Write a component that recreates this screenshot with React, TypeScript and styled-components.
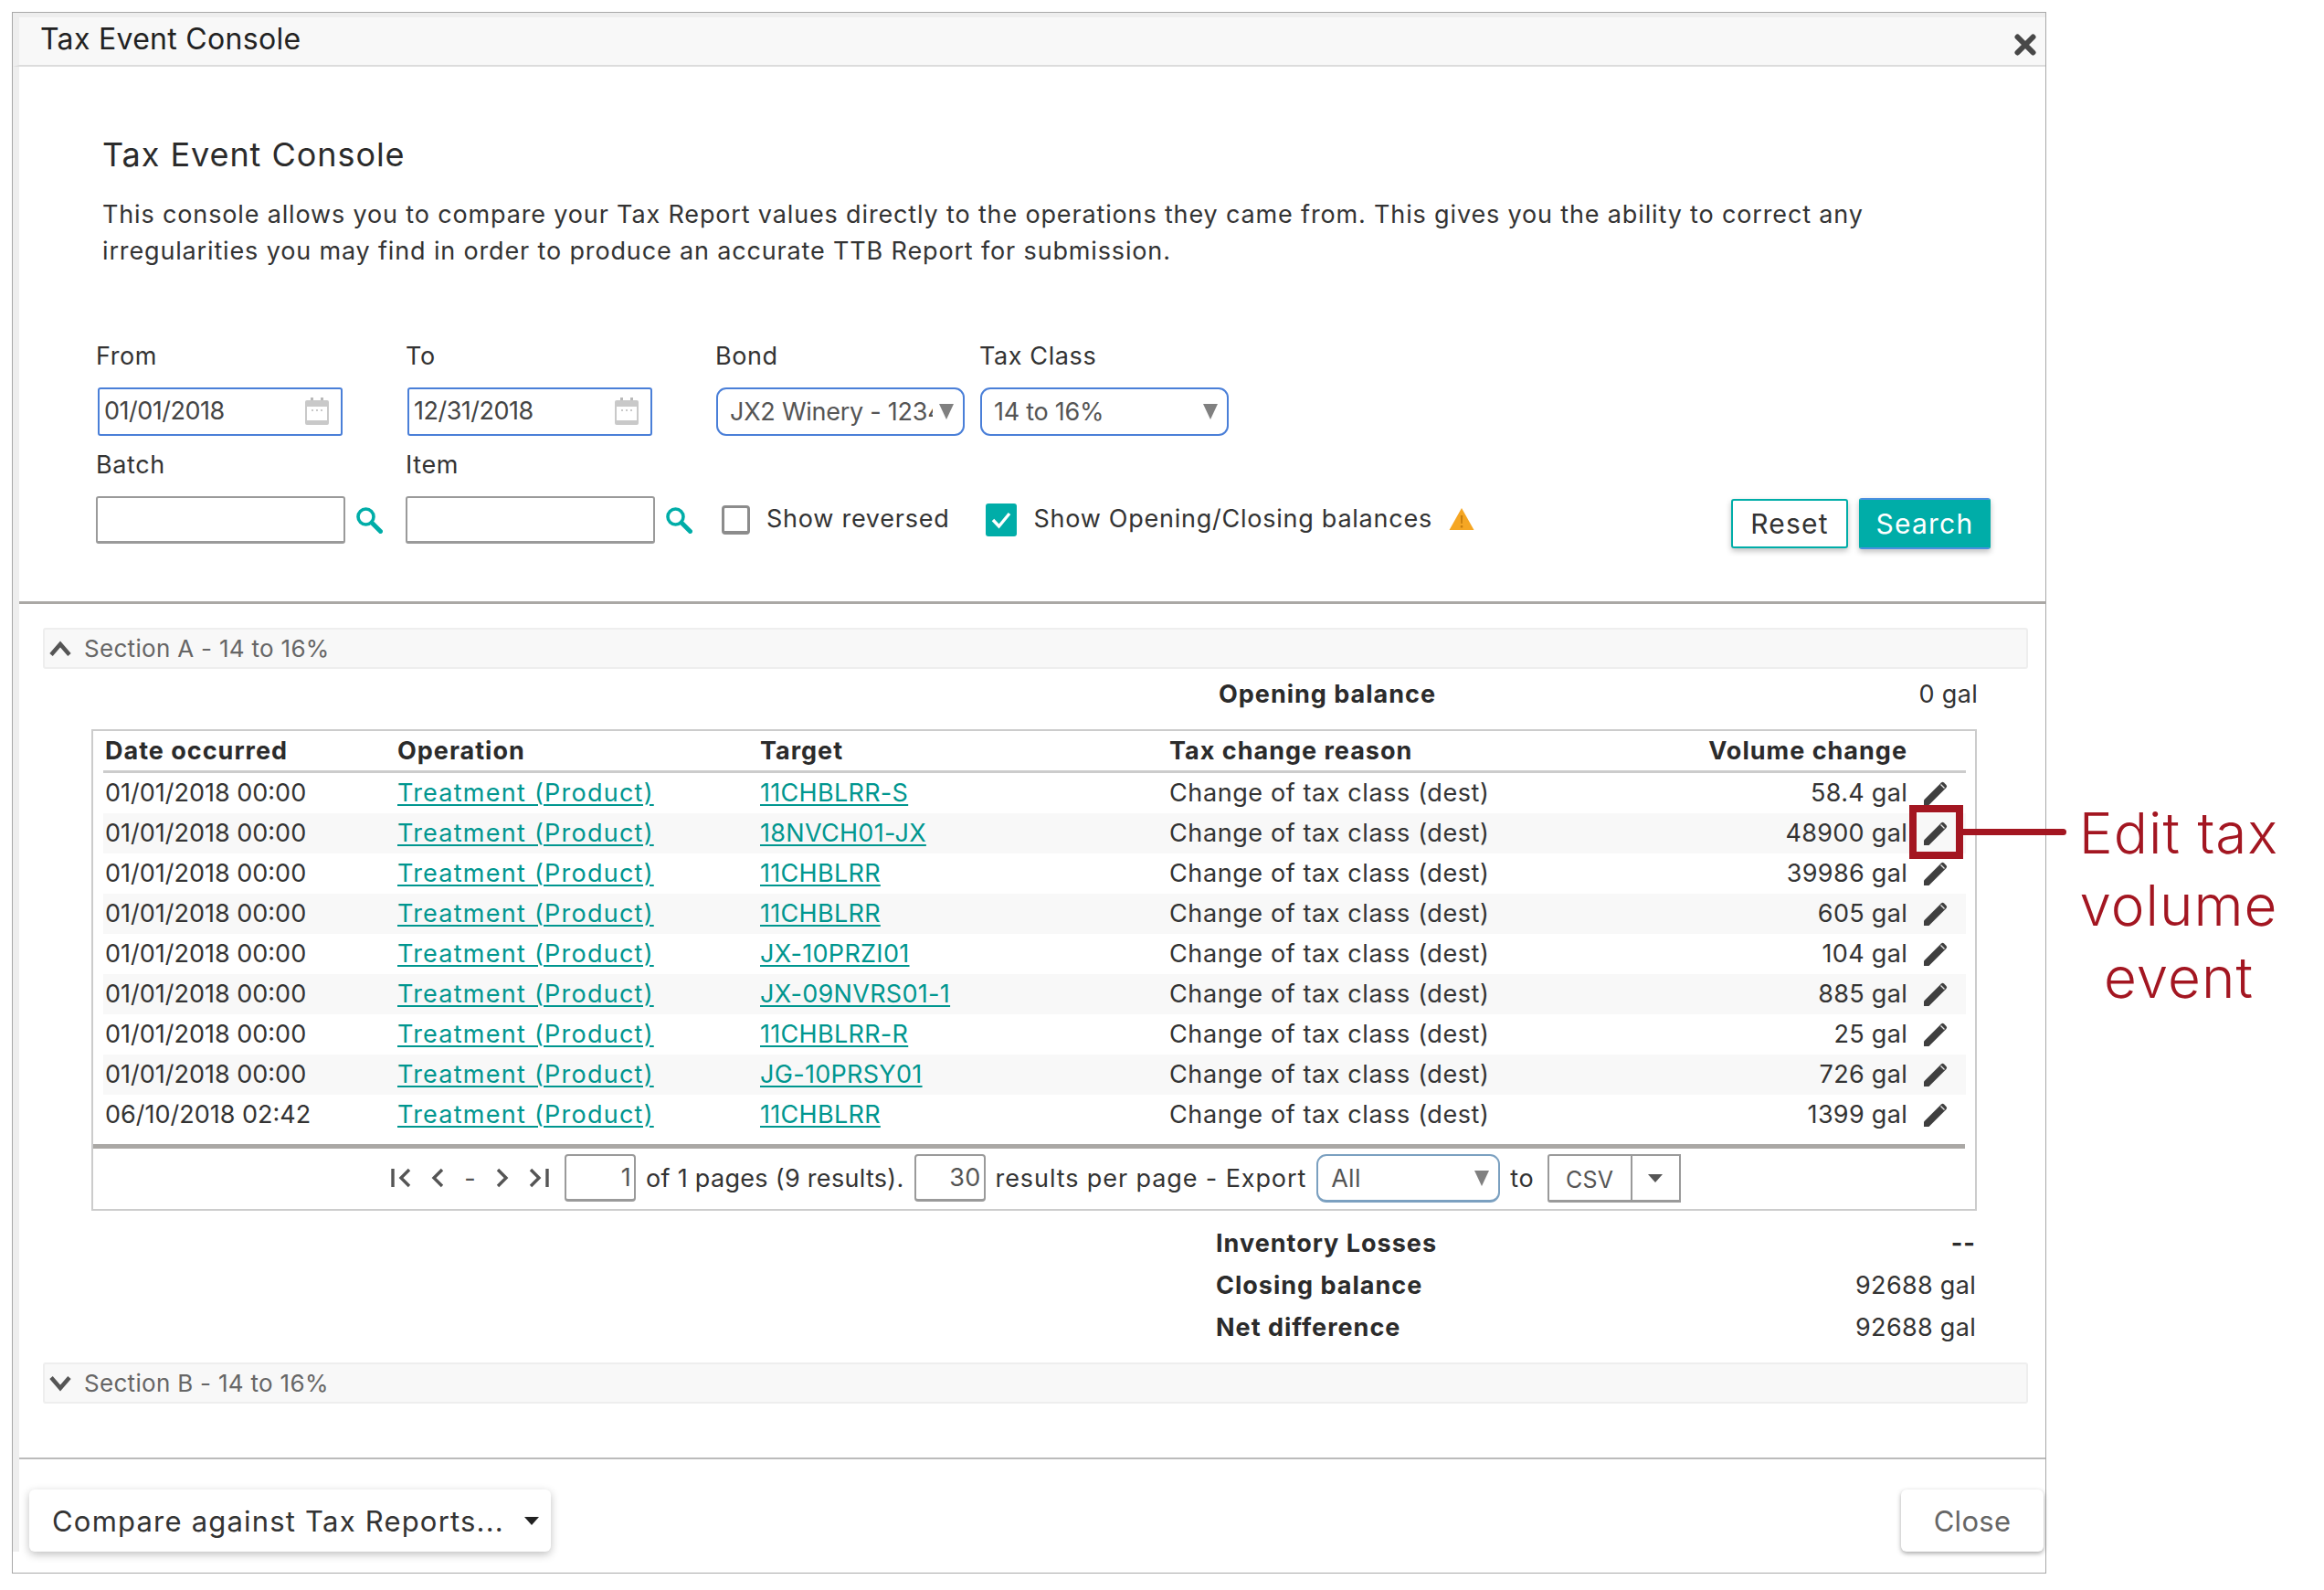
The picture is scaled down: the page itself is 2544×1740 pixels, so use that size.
import { FC } from "react";
import styled, { createGlobalStyle } from "styled-components";

const RED = "#a31621";
const TEAL = "#00ada8";
const LINK = "#00968f";

const rows = [
  { date: "01/01/2018 00:00", target: "11CHBLRR-S", volume: "58.4 gal" },
  { date: "01/01/2018 00:00", target: "18NVCH01-JX", volume: "48900 gal", marked: true },
  { date: "01/01/2018 00:00", target: "11CHBLRR", volume: "39986 gal" },
  { date: "01/01/2018 00:00", target: "11CHBLRR", volume: "605 gal" },
  { date: "01/01/2018 00:00", target: "JX-10PRZI01", volume: "104 gal" },
  { date: "01/01/2018 00:00", target: "JX-09NVRS01-1", volume: "885 gal" },
  { date: "01/01/2018 00:00", target: "11CHBLRR-R", volume: "25 gal" },
  { date: "01/01/2018 00:00", target: "JG-10PRSY01", volume: "726 gal" },
  { date: "06/10/2018 02:42", target: "11CHBLRR", volume: "1399 gal" },
];

const CloseIcon: FC = () => (
  <svg width="24" height="24" viewBox="0 0 24 24" fill="none" stroke="#484848" strokeWidth="6" strokeLinecap="round">
    <path d="M3.500 3.500l17 17M20.500 3.500l-17 17" />
  </svg>
);

const CalendarIcon: FC = () => (
  <svg width="28" height="32" viewBox="0 0 28 32">
    <path d="M7 1h3v4H7zM18 1h3v4h-3z" fill="#b8b8b8" />
    <rect x="1" y="4" width="26" height="27" rx="2" fill="#c9c9c9" />
    <rect x="3" y="11" width="22" height="15" fill="#fff" />
    <path d="M8 14h2v2H8zM13 14h2v2h-2zM18 14h2v2h-2z" fill="#c9c9c9" />
  </svg>
);

const SearchIcon: FC = () => (
  <svg width="30" height="30" viewBox="0 0 30 30" fill="none" stroke={TEAL}>
    <circle cx="11.5" cy="11.5" r="8.5" strokeWidth="3.6" />
    <path d="M18 18l9.5 9.5" strokeWidth="5" strokeLinecap="round" />
  </svg>
);

const WarningIcon: FC = () => (
  <svg width="28" height="26" viewBox="0 0 28 26">
    <path d="M14 1L27.5 25H.5z" fill="#f5a623" />
    <path d="M12.8 9h2.4l-.4 9h-1.6zM12.8 20h2.4v2.4h-2.4z" fill="#c77f10" />
  </svg>
);

const CheckIcon: FC = () => (
  <svg width="24" height="24" viewBox="0 0 24 24" fill="none" stroke="#fff" strokeWidth="3.4">
    <path d="M3 12l6.5 7L21 5" />
  </svg>
);

const PencilIcon: FC = () => (
  <svg width="28" height="28" viewBox="0 0 28 28">
    <path d="M1 27v-5.500L20 2.500a2.200 2.200 0 0 1 3 0l2.500 2.500a2.200 2.200 0 0 1 0 3L6.500 27z" fill="#3f3f3f" />
    <path d="M19.500 4.500l4 4" stroke="#e8e8e8" strokeWidth="1.200" />
  </svg>
);

const Chevron: FC<{ up?: boolean }> = ({ up }) => (
  <svg width="26" height="18" viewBox="0 0 26 18" fill="none" stroke="#555" strokeWidth="4.500">
    <path d={up ? "M3 15.500L13 4l10 11.500" : "M3 2.500L13 14 23 2.500"} />
  </svg>
);

const PagerIcon: FC<{ d: string; width: number }> = ({ d, width }) => (
  <svg width={width} height="22" viewBox={`0 0 ${width} 22`} fill="none" stroke="#555" strokeWidth="3.400">
    <path d={d} />
  </svg>
);

const App: FC = () => (
  <Page>
    <GlobalStyle />
    <Modal>
      <ModalHeader>
        <ModalTitle>Tax Event Console</ModalTitle>
        <CloseSlot>
          <CloseIcon />
        </CloseSlot>
      </ModalHeader>
      <ModalBody>
        <TopPanel>
          <Heading>Tax Event Console</Heading>
          <Intro>
            This console allows you to compare your Tax Report values directly to the operations they came from. This
            gives you the ability to correct any
            <br />
            irregularities you may find in order to produce an accurate TTB Report for submission.
          </Intro>
          <FilterRow>
            <Field $width={339}>
              <FieldLabel>From</FieldLabel>
              <DateBox>
                01/01/2018
                <CalendarIcon />
              </DateBox>
            </Field>
            <Field $width={339}>
              <FieldLabel>To</FieldLabel>
              <DateBox>
                12/31/2018
                <CalendarIcon />
              </DateBox>
            </Field>
            <Field $width={289}>
              <FieldLabel>Bond</FieldLabel>
              <SelectBox $width={272}>
                <Clip>JX2 Winery - 1234</Clip>
                <SelectArrow />
              </SelectBox>
            </Field>
            <Field $width={289}>
              <FieldLabel>Tax Class</FieldLabel>
              <SelectBox $width={272}>
                14 to 16%
                <SelectArrow />
              </SelectBox>
            </Field>
          </FilterRow>
          <FilterRow $second>
            <Field $width={339}>
              <FieldLabel>Batch</FieldLabel>
              <SearchField>
                <TextBox />
                <SearchIcon />
              </SearchField>
            </Field>
            <Field $width={339}>
              <FieldLabel>Item</FieldLabel>
              <SearchField>
                <TextBox />
                <SearchIcon />
              </SearchField>
            </Field>
            <CheckOption>
              <EmptyCheck />
              Show reversed
            </CheckOption>
            <CheckOption $checked>
              <TickedCheck>
                <CheckIcon />
              </TickedCheck>
              Show Opening/Closing balances
              <WarningIcon />
            </CheckOption>
            <FilterButtons>
              <ResetButton>Reset</ResetButton>
              <SearchButton>Search</SearchButton>
            </FilterButtons>
          </FilterRow>
        </TopPanel>

        <Results>
          <SectionBar>
            <Chevron up />
            Section A - 14 to 16%
          </SectionBar>
          <OpeningRow>
            <strong>Opening balance</strong>
            <span>0 gal</span>
          </OpeningRow>
          <TableFrame>
            <HeadRow>
              <span>Date occurred</span>
              <span>Operation</span>
              <span>Target</span>
              <span>Tax change reason</span>
              <VolumeCell>Volume change</VolumeCell>
              <span />
            </HeadRow>
            {rows.map((row, i) => (
              <DataRow key={i} $striped={i % 2 === 1}>
                <DateCell>{row.date}</DateCell>
                <TableLink $wide>Treatment (Product)</TableLink>
                <TableLink>{row.target}</TableLink>
                <ReasonCell>Change of tax class (dest)</ReasonCell>
                <VolumeCell>{row.volume}</VolumeCell>
                <EditCell>
                  <PencilIcon />
                  {row.marked && (
                    <Callout>
                      <CalloutLine />
                      <CalloutText>
                        Edit tax
                        <br />
                        volume
                        <br />
                        event
                      </CalloutText>
                    </Callout>
                  )}
                </EditCell>
              </DataRow>
            ))}
            <Pager>
              <PagerIcons>
                <PagerIcon width={22} d="M2 1v20M20 2l-9 9 9 9" />
                <PagerIcon width={14} d="M12 2l-9 9 9 9" />
                <Dash>-</Dash>
                <PagerIcon width={14} d="M2 2l9 9-9 9" />
                <PagerIcon width={22} d="M20 1v20M2 2l9 9-9 9" />
              </PagerIcons>
              <PageInput>1</PageInput>
              <PagerText $tight>of 1 pages (9 results).</PagerText>
              <PageInput>30</PageInput>
              <PagerText>results per page - Export</PagerText>
              <ExportSelect>
                All
                <SelectArrow />
              </ExportSelect>
              <PagerText>to</PagerText>
              <CsvGroup>
                <CsvLabel>CSV</CsvLabel>
                <CsvCaret>
                  <Caret $color="#555" />
                </CsvCaret>
              </CsvGroup>
            </Pager>
          </TableFrame>
          <Summary>
            <SummaryRow>
              <strong>Inventory Losses</strong>
              <strong>--</strong>
            </SummaryRow>
            <SummaryRow>
              <strong>Closing balance</strong>
              <span>92688 gal</span>
            </SummaryRow>
            <SummaryRow>
              <strong>Net difference</strong>
              <span>92688 gal</span>
            </SummaryRow>
          </Summary>
          <SectionBar>
            <Chevron />
            Section B - 14 to 16%
          </SectionBar>
        </Results>

        <Footer>
          <CompareButton>
            Compare against Tax Reports...
            <Caret $color="#222" />
          </CompareButton>
          <CloseButton>Close</CloseButton>
        </Footer>
      </ModalBody>
    </Modal>
  </Page>
);

/** Styled Components */
const GlobalStyle = createGlobalStyle`
  * {
    box-sizing: border-box;
  }

  body {
    margin: 0;
    background: #fff;
    font-family: Inter, "Noto Sans", sans-serif;
    font-size: 27px;
    letter-spacing: 0.3px;
    color: #333;
  }

  strong {
    font-weight: 700;
    letter-spacing: 1px;
    color: #2b2b2b;
  }
`;

const Page = styled.div`
  width: 2544px;
  height: 1740px;
  padding: 13px 0 0 13px;
  background: #fff;
  overflow: hidden;
`;

const Modal = styled.div`
  width: 2227px;
  height: 1709px;
  border: 1px solid #a8a8a8;
  position: relative;
`;

const ModalHeader = styled.div`
  height: 59px;
  padding: 0 10px 0 23px;
  display: flex;
  align-items: center;
  justify-content: space-between;
  background: #f8f8f8;
  border-top: 5px solid #eeeeee;
  border-left: 7px solid #eeeeee;
  border-bottom: 2px solid #dcdcdc;
`;

const ModalTitle = styled.div`
  font-size: 32px;
  margin-top: -5px;
  color: #222;
`;

const CloseSlot = styled.div`
  display: flex;
  margin-top: 8px;
`;

const ModalBody = styled.div`
  border-left: 7px solid #eeeeee;
`;

const TopPanel = styled.div`
  height: 588px;
  padding: 76px 60px 0 0;
  border-bottom: 3px solid #aaa8a5;
`;

const Heading = styled.h2`
  margin: 0 0 26px 91px;
  font-size: 36px;
  font-weight: 400;
  line-height: 40px;
  letter-spacing: 0.95px;
  color: #2b2b2b;
`;

const Intro = styled.p`
  margin: 0 0 77px 91px;
  line-height: 40px;
  letter-spacing: 0.85px;
  white-space: nowrap;
`;

const FilterRow = styled.div<{ $second?: boolean }>`
  display: flex;
  align-items: flex-end;
  padding-left: 84px;
  margin-top: ${({ $second }) => ($second ? "14px" : "0")};
`;

const Field = styled.div<{ $width: number }>`
  flex: 0 0 ${({ $width }) => $width}px;
`;

const FieldLabel = styled.div`
  line-height: 36px;
  margin-bottom: 16px;
  letter-spacing: 0.6px;
`;

const DateBox = styled.div`
  width: 268px;
  height: 53px;
  margin-left: 2px;
  padding: 0 12px 2px 5px;
  display: flex;
  align-items: center;
  justify-content: space-between;
  border: 2px solid #4a7fd8;
  border-radius: 3px;
  letter-spacing: -0.5px;
  color: #444;
`;

const SelectBox = styled.div<{ $width: number }>`
  width: ${({ $width }) => $width}px;
  height: 53px;
  margin-left: 1px;
  padding: 0 10px 0 13px;
  display: flex;
  align-items: center;
  justify-content: space-between;
  border: 2px solid #4a7fd8;
  border-radius: 11px;
  letter-spacing: -0.25px;
  color: #555;
`;

const Clip = styled.span`
  width: 222px;
  overflow: hidden;
  white-space: nowrap;
`;

const SelectArrow = styled.span`
  flex: none;
  width: 0;
  height: 0;
  border-left: 8px solid transparent;
  border-right: 8px solid transparent;
  border-top: 17px solid #808080;
`;

const SearchField = styled.div`
  display: flex;
  align-items: center;
  gap: 11px;
`;

const TextBox = styled.div`
  width: 273px;
  height: 52px;
  background: #fff;
  border: 2px solid #9a9a9a;
  border-bottom-width: 3px;
  border-radius: 3px;
`;

const CheckOption = styled.label<{ $checked?: boolean }>`
  height: 52px;
  margin-left: ${({ $checked }) => ($checked ? "40px" : "7px")};
  padding-bottom: 3px;
  display: flex;
  align-items: center;
  gap: 18px;
  letter-spacing: 0.75px;
  white-space: nowrap;
`;

const EmptyCheck = styled.span`
  width: 31px;
  height: 32px;
  margin-top: 3px;
  border: 3px solid #8c8c8c;
  border-bottom-width: 4px;
  border-radius: 4px;
`;

const TickedCheck = styled.span`
  width: 34px;
  height: 36px;
  margin-top: 3px;
  display: flex;
  align-items: center;
  justify-content: center;
  background: ${TEAL};
  border-radius: 3px;
`;

const FilterButtons = styled.div`
  margin: 0 0 -6px auto;
  display: flex;
  align-items: center;
  gap: 12px;
`;

const ResetButton = styled.button`
  width: 128px;
  height: 54px;
  font: inherit;
  font-size: 30px;
  letter-spacing: 1.2px;
  color: #333;
  background: #fff;
  border: 2px solid ${TEAL};
  border-radius: 3px;
  box-shadow: 0 3px 6px rgba(0, 0, 0, 0.25);
`;

const SearchButton = styled.button`
  width: 144px;
  height: 56px;
  font: inherit;
  font-size: 30px;
  letter-spacing: 1.2px;
  color: #fff;
  background: ${TEAL};
  border: 2px solid ${TEAL};
  border-top-color: #4a8fe0;
  border-bottom-color: #4a8fe0;
  border-radius: 3px;
  box-shadow: 0 3px 6px rgba(0, 0, 0, 0.25);
`;

const Results = styled.div`
  height: 936px;
  padding: 26px 19px 0 26px;
  border-bottom: 2px solid #bbb;
`;

const SectionBar = styled.div`
  height: 45px;
  padding-left: 4px;
  display: flex;
  align-items: center;
  gap: 13px;
  font-size: 26px;
  color: #666;
  background: #f8f8f8;
  border: 2px solid #eee;
  border-radius: 3px;
`;

const OpeningRow = styled.div`
  height: 44px;
  margin: 6px 55px 16px 0;
  padding: 0 0 2px 1287px;
  display: flex;
  align-items: center;
  justify-content: space-between;
`;

const TableFrame = styled.div`
  width: 2064px;
  height: 527px;
  margin-left: 53px;
  padding: 0 0 0 11px;
  border: 2px solid #ccc;
`;

const columns = "320px 397px 448px 500px 310px 64px";

const HeadRow = styled.div`
  width: 2039px;
  height: 46px;
  display: grid;
  grid-template-columns: ${columns};
  align-items: center;
  font-weight: 700;
  letter-spacing: 1px;
  color: #2b2b2b;
  border-bottom: 3px solid #ccc;

  > span {
    padding-left: 2px;
  }
`;

const DataRow = styled.div<{ $striped?: boolean }>`
  width: 2039px;
  height: 44px;
  display: grid;
  grid-template-columns: ${columns};
  grid-template-rows: 42px;
  align-items: center;
  background: ${({ $striped }) => ($striped ? "#f8f8f8" : "#fff")};
`;

const DateCell = styled.span`
  padding-left: 2px;
  letter-spacing: 0;
`;

const ReasonCell = styled.span`
  padding-left: 2px;
  letter-spacing: 0.6px;
`;

const TableLink = styled.a<{ $wide?: boolean }>`
  justify-self: start;
  margin-left: 2px;
  color: ${LINK};
  letter-spacing: ${({ $wide }) => ($wide ? "1.25px" : "0.3px")};
  text-decoration: underline;
  text-decoration-thickness: 2px;
  text-underline-offset: 3px;
`;

const VolumeCell = styled.div`
  text-align: right;
  white-space: nowrap;
`;

const EditCell = styled.div`
  position: relative;
  align-self: start;
  height: 44px;
  padding-left: 17px;
  display: flex;
  align-items: center;
`;

const Callout = styled.div`
  position: absolute;
  left: 2px;
  top: -9px;
  width: 59px;
  height: 59px;
  border: 8px solid ${RED};
`;

const CalloutLine = styled.span`
  position: absolute;
  left: 51px;
  top: 18px;
  width: 113px;
  height: 7px;
  background: ${RED};
  border-radius: 0 4px 4px 0;
`;

const CalloutText = styled.div`
  position: absolute;
  left: 167px;
  top: -17px;
  width: 240px;
  font-size: 62px;
  line-height: 79px;
  text-align: center;
  color: ${RED};
  letter-spacing: 1px;
  font-weight: 300;
`;

const Pager = styled.div`
  width: 2049px;
  height: 71px;
  margin: 10px 0 0 -11px;
  padding: 6px 0 0 326px;
  display: flex;
  align-items: flex-start;
  border-top: 5px solid #aaa8a5;
`;

const PagerIcons = styled.div`
  width: 173px;
  height: 52px;
  display: flex;
  align-items: center;
  justify-content: space-between;
  margin-right: 17px;
`;

const Dash = styled.span`
  color: #555;
`;

const PageInput = styled.div`
  width: 78px;
  height: 52px;
  padding-right: 3px;
  display: flex;
  align-items: center;
  justify-content: flex-end;
  color: #555;
  border: 2px solid #9a9a9a;
  border-bottom-width: 3px;
  border-radius: 4px;
`;

const PagerText = styled.span<{ $tight?: boolean }>`
  height: 52px;
  margin: 0 11px;
  display: flex;
  align-items: center;
  letter-spacing: ${({ $tight }) => ($tight ? "0.3px" : "0.9px")};
  white-space: nowrap;
`;

const ExportSelect = styled.div`
  width: 201px;
  height: 53px;
  padding: 0 10px 0 14px;
  display: flex;
  align-items: center;
  justify-content: space-between;
  color: #555;
  border: 2px solid #7ba0c0;
  border-bottom-width: 3px;
  border-radius: 11px;
`;

const CsvGroup = styled.div`
  width: 146px;
  height: 53px;
  margin-left: 3px;
  display: grid;
  grid-template-columns: 91px 1fr;
  border: 2px solid #9a9a9a;
  border-bottom-width: 3px;
  border-radius: 3px 0 0 3px;
`;

const CsvLabel = styled.span`
  padding-top: 3px;
  display: flex;
  align-items: center;
  justify-content: center;
  font-size: 25px;
  color: #555;
  border-right: 2px solid #9a9a9a;
`;

const CsvCaret = styled.span`
  display: flex;
  align-items: center;
  justify-content: center;
`;

const Caret = styled.span<{ $color: string }>`
  width: 0;
  height: 0;
  border-left: 8px solid transparent;
  border-right: 8px solid transparent;
  border-top: 9px solid ${({ $color }) => $color};
`;

const Summary = styled.div`
  margin: 12px 57px 16px 1284px;
`;

const SummaryRow = styled.div`
  height: 46px;
  display: flex;
  align-items: center;
  justify-content: space-between;
`;

const Footer = styled.div`
  padding: 33px 2px 0 11px;
  display: flex;
  align-items: flex-start;
  justify-content: space-between;
`;

const CompareButton = styled.button`
  width: 571px;
  height: 68px;
  padding: 0 13px 0 25px;
  display: flex;
  align-items: center;
  justify-content: space-between;
  font: inherit;
  font-size: 31px;
  letter-spacing: 1.2px;
  color: #333;
  background: #fff;
  border: 0;
  border-radius: 6px;
  box-shadow: 0 3px 10px rgba(0, 0, 0, 0.25);
`;

const CloseButton = styled.button`
  width: 156px;
  height: 68px;
  font: inherit;
  font-size: 31px;
  letter-spacing: 0.3px;
  color: #666;
  background: #fff;
  border: 0;
  border-radius: 6px;
  box-shadow: 0 2px 5px rgba(0, 0, 0, 0.35);
`;

export default App;
